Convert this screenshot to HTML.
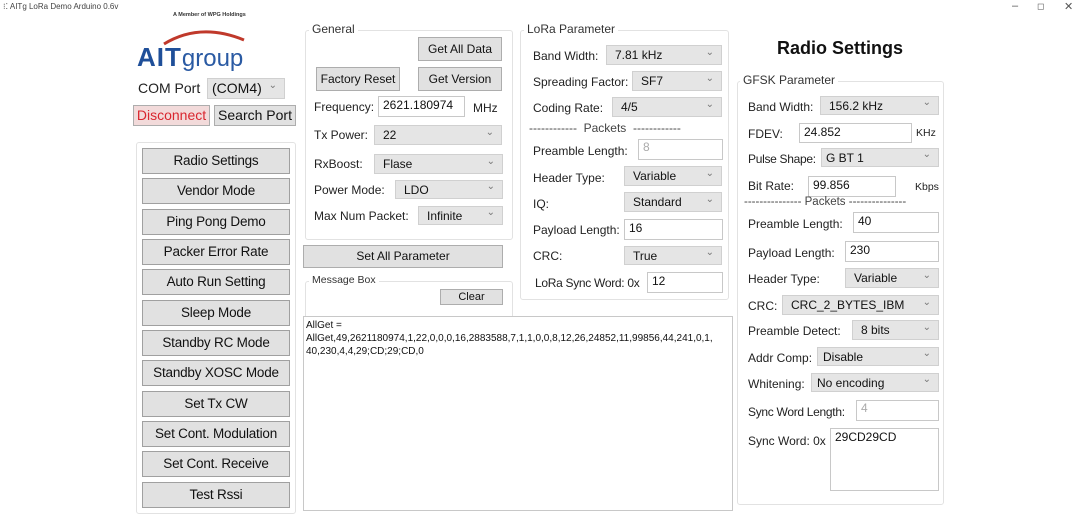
<!DOCTYPE html><html><head><meta charset="utf-8"><style>
*{box-sizing:border-box;margin:0;padding:0}
body{width:1080px;height:519px;background:#fff;position:relative;overflow:hidden;font-family:"Liberation Sans",sans-serif;font-size:12px;color:#222}
.a{position:absolute;white-space:nowrap}
.btn{position:absolute;background:#e1e1e1;border:1px solid #adadad;text-align:center;color:#111}
.sel{position:absolute;background:#e5e5e5;border:1px solid #d0d0d0;padding-left:8px;font-size:12px;color:#111}
.sel:after{content:"⌄";position:absolute;right:7px;top:-3px;font-size:10px;color:#777}
.inp{position:absolute;background:#fff;border:1px solid #c8c8c8;padding-left:4px;font-size:12px;color:#111}
.grp{position:absolute;border:1px solid #e2e2e2;border-radius:3px}
.gt{position:absolute;background:#fff;padding:0 3px;font-size:12px;color:#333}
.lbtn{position:absolute;left:142px;width:148px;height:26px;background:#e1e1e1;border:1px solid #a0a0a0;text-align:center;font-size:13.5px;line-height:24px;color:#111;letter-spacing:-0.2px}
</style></head><body>
<div class="a" style="left:3px;top:2px;font-size:8px;color:#444">⁝⁚ AITg LoRa Demo Arduino 0.6v</div>
<div class="a" style="left:1012px;top:0;font-size:11px;color:#555">–</div>
<div class="a" style="left:1037px;top:1px;font-size:9px;color:#555">◻</div>
<div class="a" style="left:1064px;top:0;font-size:11px;color:#555">✕</div>
<div class="a" style="left:173px;top:12px;font-size:5.5px;font-weight:bold;color:#333">A Member of WPG Holdings</div>
<svg class="a" style="left:160px;top:24px" width="90" height="22"><path d="M4 20 Q40 -2 84 16" stroke="#c0392b" stroke-width="3" fill="none"/></svg>
<div class="a" style="left:137px;top:42px;font-size:26px;font-weight:bold;color:#1f4f99;letter-spacing:1px">AIT<span style="font-weight:normal;font-size:24px;color:#2a5aa3;letter-spacing:0">group</span></div>
<div class="a" style="left:138px;top:80px;font-size:14px">COM Port</div>
<div class="sel" style="left:207px;top:78px;width:78px;height:21px;font-size:14px;line-height:19px;padding-left:4px">(COM4)</div>
<div class="btn" style="left:133px;top:105px;width:77px;height:21px;font-size:14px;line-height:19px;color:#d9262f;background:#f2dada">Disconnect</div>
<div class="btn" style="left:214px;top:105px;width:82px;height:21px;font-size:14px;line-height:19px">Search Port</div>
<div class="grp" style="left:136px;top:142px;width:160px;height:372px"></div>
<div class="lbtn" style="top:148px">Radio Settings</div>
<div class="lbtn" style="top:178px">Vendor Mode</div>
<div class="lbtn" style="top:209px">Ping Pong Demo</div>
<div class="lbtn" style="top:239px">Packer Error Rate</div>
<div class="lbtn" style="top:269px">Auto Run Setting</div>
<div class="lbtn" style="top:300px">Sleep Mode</div>
<div class="lbtn" style="top:330px">Standby RC Mode</div>
<div class="lbtn" style="top:360px">Standby XOSC Mode</div>
<div class="lbtn" style="top:391px">Set Tx CW</div>
<div class="lbtn" style="top:421px">Set Cont. Modulation</div>
<div class="lbtn" style="top:451px">Set Cont. Receive</div>
<div class="lbtn" style="top:482px">Test Rssi</div>

<div class="grp" style="left:305px;top:30px;width:208px;height:210px"></div>
<div class="gt" style="left:309px;top:22px">General</div>
<div class="btn" style="left:418px;top:37px;width:84px;height:24px;line-height:22px">Get All Data</div>
<div class="btn" style="left:316px;top:67px;width:84px;height:24px;line-height:22px">Factory Reset</div>
<div class="btn" style="left:418px;top:67px;width:84px;height:24px;line-height:22px">Get Version</div>
<div class="a" style="left:314px;top:100px">Frequency:</div>
<div class="inp" style="left:378px;top:96px;width:87px;height:21px;line-height:16px">2621.180974</div>
<div class="a" style="left:473px;top:101px">MHz</div>
<div class="a" style="left:314px;top:128px">Tx Power:</div>
<div class="sel" style="left:374px;top:125px;width:128px;height:20px;line-height:19px">22</div>
<div class="a" style="left:314px;top:157px">RxBoost:</div>
<div class="sel" style="left:374px;top:154px;width:129px;height:20px;line-height:19px">Flase</div>
<div class="a" style="left:314px;top:183px">Power Mode:</div>
<div class="sel" style="left:395px;top:180px;width:108px;height:19px;line-height:18px">LDO</div>
<div class="a" style="left:314px;top:209px">Max Num Packet:</div>
<div class="sel" style="left:418px;top:206px;width:85px;height:19px;line-height:18px">Infinite</div>
<div class="btn" style="left:303px;top:245px;width:200px;height:23px;line-height:21px">Set All  Parameter</div>
<div class="grp" style="left:305px;top:281px;width:208px;height:40px"></div>
<div class="gt" style="left:309px;top:274px;font-size:10.5px">Message Box</div>
<div class="btn" style="left:440px;top:289px;width:63px;height:16px;line-height:14px;font-size:11px">Clear</div>
<div class="inp" style="left:303px;top:316px;width:430px;height:195px;font-size:10px;line-height:13px;padding:2px 2px">AllGet =<br>AllGet,49,2621180974,1,22,0,0,0,16,2883588,7,1,1,0,0,8,12,26,24852,11,99856,44,241,0,1,<br>40,230,4,4,29;CD;29;CD,0</div>

<div class="grp" style="left:520px;top:30px;width:209px;height:270px"></div>
<div class="gt" style="left:524px;top:22px">LoRa Parameter</div>
<div class="a" style="left:533px;top:49px">Band Width:</div>
<div class="sel" style="left:606px;top:45px;width:116px;height:20px;line-height:19px">7.81 kHz</div>
<div class="a" style="left:533px;top:75px">Spreading Factor:</div>
<div class="sel" style="left:632px;top:71px;width:90px;height:20px;line-height:19px">SF7</div>
<div class="a" style="left:533px;top:101px">Coding Rate:</div>
<div class="sel" style="left:612px;top:97px;width:110px;height:20px;line-height:19px">4/5</div>
<div class="a" style="left:529px;top:121px;color:#444">------------&nbsp;&nbsp;Packets&nbsp;&nbsp;------------</div>
<div class="a" style="left:533px;top:144px">Preamble Length:</div>
<div class="inp" style="left:638px;top:139px;width:85px;height:21px;color:#aaa;line-height:14px">8</div>
<div class="a" style="left:533px;top:171px">Header Type:</div>
<div class="sel" style="left:624px;top:166px;width:98px;height:20px;line-height:19px">Variable</div>
<div class="a" style="left:533px;top:197px">IQ:</div>
<div class="sel" style="left:624px;top:192px;width:98px;height:20px;line-height:19px">Standard</div>
<div class="a" style="left:533px;top:223px">Payload Length:</div>
<div class="inp" style="left:624px;top:219px;width:99px;height:21px;line-height:16px">16</div>
<div class="a" style="left:533px;top:249px">CRC:</div>
<div class="sel" style="left:624px;top:246px;width:98px;height:19px;line-height:18px">True</div>
<div class="a" style="left:535px;top:276px;letter-spacing:-0.3px">LoRa Sync Word: 0x</div>
<div class="inp" style="left:647px;top:272px;width:76px;height:21px;line-height:16px">12</div>

<div class="a" style="left:777px;top:38px;font-size:18px;font-weight:bold;color:#111">Radio Settings</div>
<div class="grp" style="left:737px;top:81px;width:207px;height:424px"></div>
<div class="gt" style="left:740px;top:73px">GFSK Parameter</div>
<div class="a" style="left:748px;top:100px">Band Width:</div>
<div class="sel" style="left:820px;top:96px;width:119px;height:19px;line-height:18px">156.2 kHz</div>
<div class="a" style="left:748px;top:127px">FDEV:</div>
<div class="inp" style="left:799px;top:123px;width:113px;height:20px;line-height:16px">24.852</div>
<div class="a" style="left:916px;top:127px;font-size:10.5px">KHz</div>
<div class="a" style="left:748px;top:152px;letter-spacing:-0.3px">Pulse Shape:</div>
<div class="sel" style="left:821px;top:148px;width:118px;height:19px;line-height:18px;padding-left:4px">G BT 1</div>
<div class="a" style="left:748px;top:179px">Bit Rate:</div>
<div class="inp" style="left:808px;top:176px;width:88px;height:21px;line-height:16px">99.856</div>
<div class="a" style="left:915px;top:181px;font-size:10.5px">Kbps</div>
<div class="a" style="left:744px;top:196px;color:#444;font-size:11.5px">--------------- Packets ---------------</div>
<div class="a" style="left:748px;top:217px">Preamble Length:</div>
<div class="inp" style="left:853px;top:212px;width:86px;height:21px;line-height:16px">40</div>
<div class="a" style="left:748px;top:246px">Payload Length:</div>
<div class="inp" style="left:845px;top:241px;width:94px;height:21px;line-height:16px">230</div>
<div class="a" style="left:748px;top:272px">Header Type:</div>
<div class="sel" style="left:845px;top:268px;width:94px;height:20px;line-height:19px">Variable</div>
<div class="a" style="left:748px;top:299px">CRC:</div>
<div class="sel" style="left:782px;top:295px;width:157px;height:20px;line-height:19px">CRC_2_BYTES_IBM</div>
<div class="a" style="left:748px;top:324px">Preamble Detect:</div>
<div class="sel" style="left:852px;top:320px;width:87px;height:20px;line-height:19px">8 bits</div>
<div class="a" style="left:748px;top:351px">Addr Comp:</div>
<div class="sel" style="left:817px;top:347px;width:122px;height:19px;line-height:18px;padding-left:5px">Disable</div>
<div class="a" style="left:748px;top:377px">Whitening:</div>
<div class="sel" style="left:811px;top:373px;width:128px;height:19px;line-height:18px;padding-left:5px">No encoding</div>
<div class="a" style="left:748px;top:405px;letter-spacing:-0.3px">Sync Word Length:</div>
<div class="inp" style="left:856px;top:400px;width:83px;height:21px;color:#aaa;line-height:14px">4</div>
<div class="a" style="left:748px;top:434px">Sync Word: 0x</div>
<div class="inp" style="left:830px;top:428px;width:109px;height:63px;line-height:16px">29CD29CD</div>
</body></html>
